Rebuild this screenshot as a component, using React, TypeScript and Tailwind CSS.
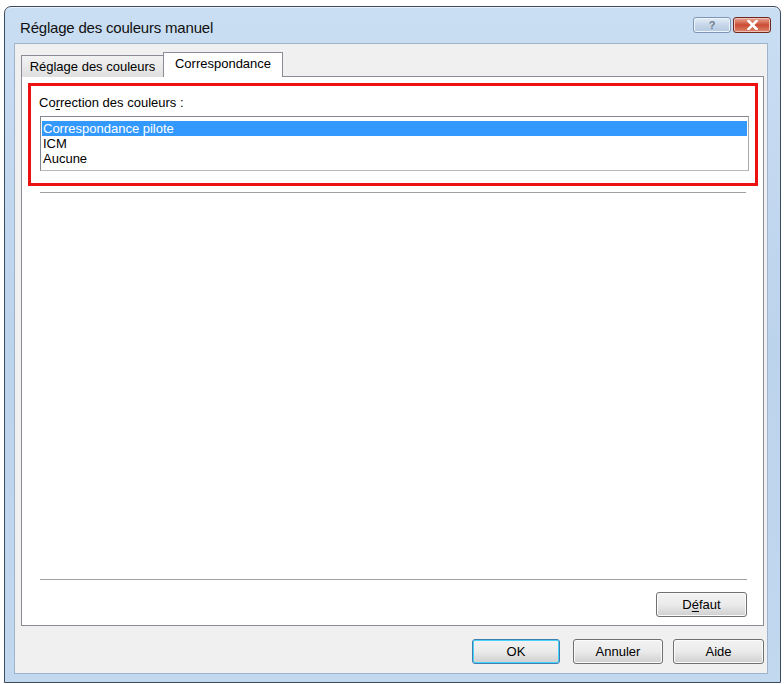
import React from "react";

// Mnemonic letter (underlined access key), as Windows draws it
function Key({ c }: { c: string }) {
  return <span className="underline underline-offset-[2px]">{c}</span>;
}

function DlgButton({
  children,
  w,
  isDefault = false,
}: {
  children: React.ReactNode;
  w: string;
  isDefault?: boolean;
}) {
  return (
    <button
      className={`${w} h-[25px] rounded-[3px] border text-[13px] text-black flex items-center justify-center bg-gradient-to-b from-[#f2f2f2] via-[#ebebeb] to-[#cfcfcf] ${
        isDefault
          ? "border-[#3c7fb1] shadow-[inset_0_0_0_1px_#48d2fc]"
          : "border-[#707070] shadow-[inset_0_0_0_1px_#fbfbfb]"
      }`}
    >
      {children}
    </button>
  );
}

export default function App() {
  const items = ["Correspondance pilote", "ICM", "Aucune"];

  return (
    <div
      className="w-[784px] h-[684px] bg-white pt-[6px] pl-[4px]"
      style={{ fontFamily: '"Liberation Sans", Arial, sans-serif' }}
    >
      <div className="w-[777px] h-[677px] flex flex-col rounded-t-[7px] border border-[#3b4c5e] bg-gradient-to-b from-[#cadef3] via-[#bcd3ec] to-[#c2d8ef] shadow-[inset_0_1px_0_#e8f1fb]">
        {/* Title bar */}
        <div className="h-[36px] flex items-start pl-[15px] pr-[9px]">
          <span className="text-[15px] text-[#111] tracking-[-0.2px] flex-1 mt-[12px] leading-[18px]">
            Réglage des couleurs manuel
          </span>
          <div className="flex gap-[2px] mt-[10px]">
            <div className="w-[38px] h-[16px] rounded-[3px] border border-[#7e96b3] bg-gradient-to-b from-[#e4edf7] via-[#c6d6e8] to-[#b5c9e0] flex items-center justify-center shadow-[inset_0_0_0_1px_#eef4fb]">
              <span className="text-[11px] font-bold text-[#6f7f93] leading-none">?</span>
            </div>
            <div className="w-[38px] h-[16px] rounded-[3px] border border-[#6e2a20] bg-gradient-to-b from-[#e7a99b] via-[#cb4a32] to-[#d9876f] flex items-center justify-center shadow-[inset_0_0_0_1px_#f0c0b4]">
              <svg width="11" height="10" viewBox="0 0 11 10">
                <path
                  d="M1.5 1 L9.5 9 M9.5 1 L1.5 9"
                  stroke="#ffffff"
                  strokeWidth="2.6"
                  strokeLinecap="square"
                />
              </svg>
            </div>
          </div>
        </div>

        {/* Client area */}
        <div className="flex-1 flex pl-[9px] pr-[12px] pb-[8px]">
          <div className="flex-1 flex flex-col bg-[#f0f0f0] border border-[#9fb4cc] pt-[8px] pl-[6px] pr-[3px] pb-[9px]">
            {/* Tabs */}
            <div className="flex items-end h-[25px] -mb-px relative z-10">
              <div className="h-[22px] w-[143px] border border-b-0 border-[#898c95] bg-gradient-to-b from-[#f2f2f2] to-[#e0e0e0] flex items-center justify-center text-[13px] text-black">
                Réglage des couleurs
              </div>
              <div className="h-[25px] w-[120px] -ml-px border border-b-0 border-[#898c95] bg-white flex items-center justify-center text-[13px] text-black pb-[2px]">
                Correspondance
              </div>
            </div>

            {/* Tab panel */}
            <div className="flex-1 flex flex-col bg-white border border-[#898c95]">
              {/* Highlighted group */}
              <div className="mt-[6px] ml-[6px] mr-[5px] h-[103px] border-[3px] border-[#ee1111] pt-[9px] pl-[8px] pr-[6px] flex flex-col">
                <div className="h-[15px] text-[13px] text-black leading-[15px]">
                  Co<Key c="r" />rection des couleurs :
                </div>
                <div className="mt-[6px] ml-[1px] h-[55px] border border-[#828790] border-r-[#a8a8a8] border-b-[#b8b8b8] bg-white pt-[4px] px-[1px] flex flex-col">
                  {items.map((t, i) => (
                    <div
                      key={t}
                      className={`h-[15px] leading-[15px] pl-[1px] text-[13px] ${
                        i === 0 ? "bg-[#3399ff] text-white" : "text-black"
                      }`}
                    >
                      {t}
                    </div>
                  ))}
                </div>
              </div>

              {/* Etched separator */}
              <div className="mt-[6px] ml-[18px] mr-[17px] h-[2px] border-t border-[#a0a0a0] border-b border-b-white" />

              <div className="flex-1" />

              <div className="ml-[18px] mr-[16px] h-[2px] border-t border-[#a0a0a0] border-b border-b-white" />
              <div className="flex justify-end mt-[11px] mb-[8px] mr-[16px]">
                <DlgButton w="w-[91px]">
                  D<Key c="é" />faut
                </DlgButton>
              </div>
            </div>

            {/* Dialog buttons */}
            <div className="flex justify-end mt-[13px] gap-[10px]">
              <div className="mr-[3px]">
                <DlgButton w="w-[88px]" isDefault>
                  OK
                </DlgButton>
              </div>
              <DlgButton w="w-[90px]">Annuler</DlgButton>
              <DlgButton w="w-[91px]">Aide</DlgButton>
            </div>
          </div>
        </div>
      </div>
    </div>
  );
}
